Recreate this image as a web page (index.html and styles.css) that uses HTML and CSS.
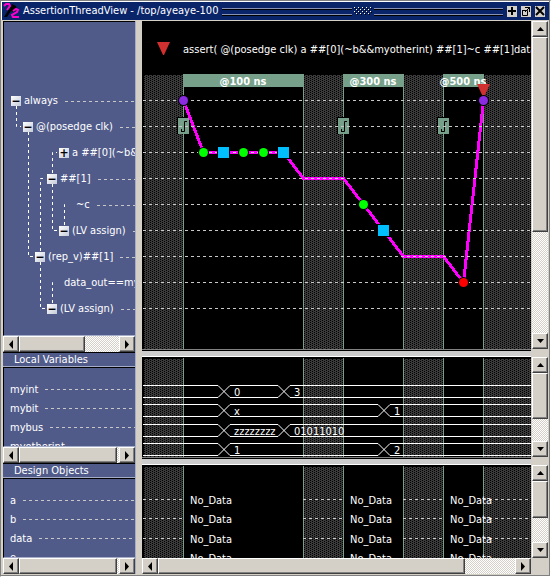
FILE: index.html
```html
<!DOCTYPE html>
<html lang="en">
<head>
<meta charset="utf-8">
<title>AssertionThreadView - /top/ayeaye-100</title>
<link rel="stylesheet" href="styles.css">
</head>
<body>
<main class="window">
  <header class="titlebar">
    <svg class="logo" width="17" height="16" viewBox="0 0 17 16" aria-hidden="true">
      <path d="M1 14 6 6 9 1 13 3 14 7 10 9 8 8 4 14Z" fill="#000"/>
      <path d="M1 3 3 1H6L7 3 4 7M10 8 13 6 15 7 14 9 9 12 10 14H16" fill="none" stroke="#f0c" stroke-width="2"/>
    </svg>
    <h1>AssertionThreadView - /top/ayeaye-100</h1>
    <span class="grip"></span>
    <svg class="dots" width="18" height="8" aria-hidden="true"><defs><pattern id="dots" width="4" height="4" patternUnits="userSpaceOnUse"><path d="M0 0H1V1H0ZM2 2H3V3H2Z" fill="#fff"/><path d="M1 1H2V2H1ZM3 3H4V4H3Z" fill="#000"/></pattern></defs><rect width="18" height="8" fill="url(#dots)"/></svg>
    <span class="grip"></span>
    <button class="tool" aria-label="Add"><svg width="10" height="10"><path d="M5 1V9M1 5H9" stroke="#000" stroke-width="2"/></svg></button>
    <button class="tool" aria-label="Undock"><svg width="10" height="10" fill="none" stroke="#000"><path d="M1 4.5H6.5V9.5H1.5V4M4 1.5H9M8.5 1V6M4 6 8 2"/></svg></button>
    <button class="tool" aria-label="Close"><svg width="10" height="10"><path d="M1 1 9 9M9 1 1 9" stroke="#000" stroke-width="2"/></svg></button>
  </header>

  <div class="body">
    <section class="side">
      <div class="pane tree-pane">
        <svg class="branches" width="100%" height="100%" aria-hidden="true">
          <path d="M12.5 84V104.5H17M24.5 110V234.5H29M48.5 151V130.5H53M36.5 229V156.5H41M48.5 162V208.5H53M60.5 203V182.5H64M36.5 240V286.5H41M48.5 281V260.5H52"/>
        </svg>
        <ul class="tree">
          <li class="l0"><button aria-label="Collapse">−</button><span>always</span><i></i></li>
          <li class="l1"><button aria-label="Collapse">−</button><span>@(posedge clk)</span><i></i></li>
          <li class="l4"><button aria-label="Expand">+</button><span>a ##[0](~b&amp;&amp;myotherint)</span><i></i></li>
          <li class="l3"><button aria-label="Collapse">−</button><span>##[1]</span><i></i></li>
          <li class="l5 leaf"><span>~c</span><i></i></li>
          <li class="l4"><button aria-label="Collapse">−</button><span>(LV assign)</span><i></i></li>
          <li class="l2"><button aria-label="Collapse">−</button><span>(rep_v)##[1]</span><i></i></li>
          <li class="l4 leaf"><span>data_out==myotherint</span><i></i></li>
          <li class="l3"><button aria-label="Collapse">−</button><span>(LV assign)</span><i></i></li>
        </ul>
      </div>
      <div class="scroll across">
        <button aria-label="Scroll left"><svg width="8" height="9"><path d="M6 0V9L2 4.5Z"/></svg></button><span class="thumb wide-half"></span><span class="track"></span><button aria-label="Scroll right"><svg width="8" height="9"><path d="M2 0V9L6 4.5Z"/></svg></button>
      </div>
      <h2>Local Variables</h2>
      <div class="pane vars">
        <ul class="names">
          <li><span>myint</span><i></i></li>
          <li><span>mybit</span><i></i></li>
          <li><span>mybus</span><i></i></li>
          <li><span>myotherint</span></li>
        </ul>
      </div>
      <div class="scroll across">
        <button aria-label="Scroll left"><svg width="8" height="9"><path d="M6 0V9L2 4.5Z"/></svg></button><span class="thumb wide-most"></span><span class="track"></span><button aria-label="Scroll right"><svg width="8" height="9"><path d="M2 0V9L6 4.5Z"/></svg></button>
      </div>
      <h2>Design Objects</h2>
      <div class="pane objects">
        <ul class="names">
          <li><span>a</span><i></i></li>
          <li><span>b</span><i></i></li>
          <li><span>data</span><i></i></li>
          <li><span>e</span></li>
        </ul>
      </div>
      <div class="scroll across">
        <button aria-label="Scroll left"><svg width="8" height="9"><path d="M6 0V9L2 4.5Z"/></svg></button><span class="thumb wide-most"></span><span class="track"></span><button aria-label="Scroll right"><svg width="8" height="9"><path d="M2 0V9L6 4.5Z"/></svg></button>
      </div>
    </section>

    <section class="charts">
      <div class="row main-row">
        <svg class="canvas" role="img" aria-label="Thread timeline">
          <defs>
            <pattern id="mesh" width="4" height="2" patternUnits="userSpaceOnUse"><path d="M0 0H4V2H0Z" fill="#3a3a3a"/><path d="M0 0H1V1H0ZM2 1H3V2H2Z" fill="#000"/></pattern>
            <g id="bands">
              <path fill="url(#mesh)" d="M2 1H41V400H2ZM161 1H201V400H161ZM261 1H301V400H261ZM341 1H1400V400H341Z"/>
              <path class="edge" d="M41.5 0V400M161.5 0V400M201.5 0V400M261.5 0V400M301.5 0V400M341.5 0V400"/>
            </g>
            <g id="clock"><path d="M-6-9H6V8H-6Z" fill="#000"/><path d="M-5-8H6V8H-5Z" fill="#76a08a"/><path d="M4-4.500H1.500V5.500H-2M-1.500 3V6" fill="none" stroke="#000"/></g>
          </defs>
          <use href="#bands" y="53"/>
          <path fill="#76a08a" d="M41 53H162V66H41ZM201 53H262V66H201ZM301 53H342V66H301Z"/>
          <path fill="#d03030" d="M15 21H28L22 34H21Z"/>
          <text x="41" y="32">assert( @(posedge clk) a ##[0](~b&amp;&amp;myotherint) ##[1]~c ##[1]data_out==myotherint</text>
          <g class="time"><text x="101" y="64">@100 ns</text><text x="231" y="64">@300 ns</text><text x="321" y="64">@500 ns</text></g>
          <use href="#clock" x="41" y="105"/><use href="#clock" x="201" y="105"/><use href="#clock" x="301" y="105"/>
          <path class="thread" d="M41.5 79.5 61.5 131.5H141.5L161.5 157.5H201.5L261.5 235.5H301.5L321.5 261.5 341.5 79.5"/>
          <path class="guide" d="M1 79.5H1400M1 105.5H1400M1 131.5H1400M1 157.5H1400M1 183.5H1400M1 209.5H1400M1 235.5H1400M1 261.5H1400M1 287.5H1400"/>
          <path fill="#d03030" d="M335 63H348L342 76H341Z"/>
          <g class="halo"><circle cx="41.5" cy="79.5" r="4.5" fill="#8a2be2"/><circle cx="341.5" cy="79.5" r="4.5" fill="#8a2be2"/>
          <circle cx="61.5" cy="131.5" r="4.5" fill="#0f0"/><circle cx="101.5" cy="131.5" r="4.5" fill="#0f0"/><circle cx="121.5" cy="131.5" r="4.5" fill="#0f0"/><circle cx="221.5" cy="183.5" r="4.5" fill="#0f0"/>
          <circle cx="321.5" cy="261.5" r="4.5" fill="red"/>
          <path fill="#00bfff" d="M76 126H87V137H76ZM136 126H147V137H136ZM236 204H247V215H236Z"/></g>
        </svg>
        <div class="scroll down">
          <button aria-label="Scroll up"><svg width="9" height="8"><path d="M1 6H8L4.5 2Z"/></svg></button><span class="thumb tall"></span><span class="track"></span><button aria-label="Scroll down"><svg width="9" height="8"><path d="M1 2H8L4.5 6Z"/></svg></button>
        </div>
      </div>
      <div class="sash"></div>
      <div class="row var-row">
        <svg class="canvas" role="img" aria-label="Local variable waveforms">
          <use href="#bands" y="1"/>
          <path class="wave" d="M1 28.5H76L88 40.5H136L148 28.5H1400M1 40.5H76L88 28.5H136L148 40.5H1400
            M1 47.5H76L88 59.5H236L248 47.5H1400M1 59.5H76L88 47.5H236L248 59.5H1400
            M1 67.5H76L88 79.5H136L148 67.5H1400M1 79.5H76L88 67.5H136L148 79.5H1400
            M1 86.5H76L88 98.5H236L248 86.5H1400M1 98.5H76L88 86.5H236L248 98.5H1400"/>
          <g><text x="92" y="39">0</text><text x="152" y="39">3</text><text x="92" y="58">x</text><text x="252" y="58">1</text><text x="92" y="78">zzzzzzzz</text><text x="152" y="78">01011010</text><text x="92" y="97">1</text><text x="252" y="97">2</text></g>
        </svg>
        <div class="scroll down">
          <button aria-label="Scroll up"><svg width="9" height="8"><path d="M1 6H8L4.5 2Z"/></svg></button><span class="thumb mid"></span><span class="track"></span><button aria-label="Scroll down"><svg width="9" height="8"><path d="M1 2H8L4.5 6Z"/></svg></button>
        </div>
      </div>
      <div class="sash"></div>
      <div class="row obj-row">
        <svg class="canvas" role="img" aria-label="Design object values">
          <use href="#bands" y="1"/>
          <path class="guide" d="M1 34.5H41M1 53.5H41M1 73.5H41M161 34.5H201M161 53.5H201M161 73.5H201M261 34.5H301M261 53.5H301M261 73.5H301M341 34.5H1400M341 53.5H1400M341 73.5H1400"/>
          <text x="48" y="39">No_Data</text><text x="208" y="39">No_Data</text><text x="308" y="39">No_Data</text>
          <text x="48" y="58">No_Data</text><text x="208" y="58">No_Data</text><text x="308" y="58">No_Data</text>
          <text x="48" y="78">No_Data</text><text x="208" y="78">No_Data</text><text x="308" y="78">No_Data</text>
          <text x="48" y="97">No_Data</text><text x="208" y="97">No_Data</text><text x="308" y="97">No_Data</text>
        </svg>
        <div class="scroll down">
          <button aria-label="Scroll up"><svg width="9" height="8"><path d="M1 6H8L4.5 2Z"/></svg></button><span class="thumb short"></span><span class="track"></span><button aria-label="Scroll down"><svg width="9" height="8"><path d="M1 2H8L4.5 6Z"/></svg></button>
        </div>
      </div>
      <div class="scroll across chart-scroll">
        <button aria-label="Scroll left"><svg width="8" height="9"><path d="M6 0V9L2 4.5Z"/></svg></button><span class="thumb wide-chart"></span><span class="track"></span><button aria-label="Scroll right"><svg width="8" height="9"><path d="M2 0V9L6 4.5Z"/></svg></button>
      </div>
    </section>
  </div>
</main>
</body>
</html>
```

FILE: styles.css
```css
* { box-sizing: border-box; }
body { margin: 0; background: #d4d0c8; color: #fff; font: 11px/14px "DejaVu Sans Condensed", "DejaVu Sans", sans-serif; }
ul { list-style: none; margin: 0; padding: 0; }
button { margin: 0; padding: 0; font: inherit; }
h1, h2 { margin: 0; font-size: inherit; font-weight: normal; }

.window { display: flex; flex-direction: column; height: 100vh; min-height: 480px; padding: 0 1px 1px 0; border: 1px solid; border-color: #808080 #fff #fff #808080; background: #d4d0c8; box-shadow: inset -1px -1px #808080; }

.titlebar { display: flex; align-items: center; flex: none; height: 19px; padding: 0 4px 0 1px; background: #0a246a; border-top: 1px solid #fff; border-left: 1px solid #fff; }
.titlebar h1 { margin: 0 4px 0 3px; white-space: nowrap; }
.grip { flex: 1; height: 7px; border: solid #8791b6; border-width: 1px 0; box-shadow: 0 1px #000, inset 0 1px #000; }
.dots { margin: 0 2px; }
.tool { display: grid; place-items: center; width: 10px; height: 11px; margin-left: 4px; background: #d4d0c8; border: 0; }

.body { display: flex; flex: 1; min-height: 0; padding: 1px 1px 1px 2px; }
.side { display: flex; flex-direction: column; width: 133px; margin-right: 6px; border-right: 1px solid #a4acc8; }
.charts { display: flex; flex-direction: column; flex: 1; min-width: 0; }

.pane { position: relative; overflow: hidden; background: #515b8a; border: solid #000; border-width: 1px 0 0 1px; border-bottom: 1px solid #a4acc8; }
.tree-pane { flex: 1; min-height: 0; }
.vars, .objects { flex: none; height: 80px; }
.side h2 { flex: none; height: 15px; padding-left: 11px; background: #515b8a; border-top: 1px solid #000; border-bottom: 1px solid #a4acc8; }

.branches { position: absolute; inset: 0; fill: none; stroke: #fff; stroke-dasharray: 3 3; }
.tree { position: relative; padding-top: 66px; }
.tree li { display: flex; align-items: center; height: 26px; white-space: nowrap; }
.tree button { flex: none; width: 10px; height: 10px; margin-right: 3px; background: linear-gradient(135deg, #fff, #c4cad8); color: #000; border: 0; font-size: 12px; font-weight: bold; line-height: 10px; text-align: center; }
.tree .l0 { padding-left: 7px; }
.tree .l1 { padding-left: 19px; }
.tree .l2 { padding-left: 31px; }
.tree .l3 { padding-left: 43px; }
.tree .l4 { padding-left: 55px; }
.tree .l5 { padding-left: 67px; }
.tree .leaf span { padding-left: 5px; }
.side i { flex: 1; height: 1px; margin-left: 7px; background: repeating-linear-gradient(90deg, #c8c8c8 0 3px, transparent 3px 6px); }
.names { padding-top: 12px; }
.names li { display: flex; align-items: center; height: 19px; padding-left: 6px; white-space: nowrap; }

.row { display: flex; flex: none; min-height: 0; }
.main-row { flex: 1; }
.var-row { height: 100px; }
.obj-row { height: 93px; }
.canvas { display: block; flex: 1; min-width: 0; height: 100%; background: #000; }
.canvas text { fill: #fff; }
.canvas .time { font-weight: bold; text-anchor: middle; }
.edge { stroke: #76a08a; }
.guide { stroke: #c8c8c8; stroke-dasharray: 3 3; }
.thread { fill: none; stroke: #f0f; stroke-width: 3; shape-rendering: crispEdges; }
.wave { fill: none; stroke: #fff; }
.halo > * { stroke: #000; stroke-width: 2; paint-order: stroke; }
.sash { flex: none; height: 8px; margin-right: 17px; background: #ccc; border-top: 1px solid #808080; border-bottom: 1px solid #fff; box-shadow: inset 0 1px #000; }

.scroll { display: flex; flex: none; background: conic-gradient(#fff 25%, #d4d0c8 0 50%, #fff 0 75%, #d4d0c8 0) 0 0 / 2px 2px; }
.scroll button, .thumb { display: grid; place-items: center; flex: none; background: #d4d0c8; border: 1px solid; border-color: #fff #404040 #404040 #fff; box-shadow: inset -1px -1px #808080; }
.across { height: 16px; }
.across button { width: 16px; }
.down { flex-direction: column; width: 16px; margin-left: 1px; }
.down button { height: 16px; }
.track { flex: 1; }
.wide-half { width: 50%; }
.wide-most { width: 74%; }
.wide-chart { width: 79%; }
.tall { height: 195px; }
.mid { height: 46px; }
.short { height: 37px; }
.chart-scroll { margin-right: 17px; }
```
